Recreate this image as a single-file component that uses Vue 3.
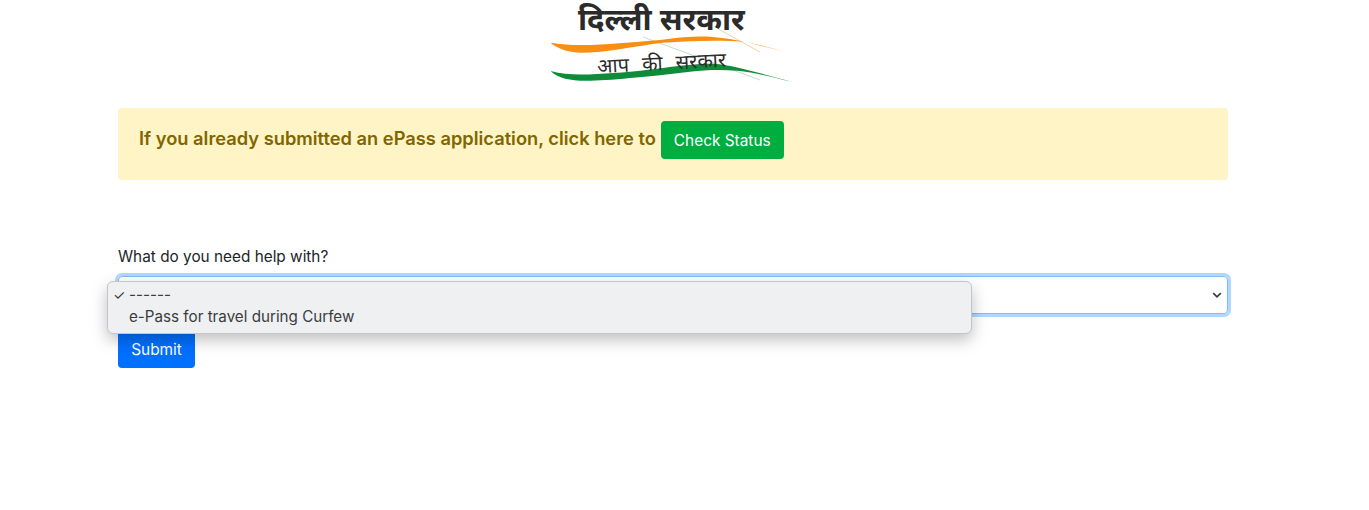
<script setup>
const options = [
  { text: '------', checked: true },
  { text: 'e-Pass for travel during Curfew', checked: false },
]
</script>

<template>
  <main class="page">
    <header class="logo">
      <svg class="logo-art" viewBox="0 -10 244 62" width="244" height="62">
        <path d="M168 -5 L210 18" stroke="#e9b36a" stroke-width="0.6" fill="none" />
        <path d="M93 3 L210 46" stroke="#9cc4aa" stroke-width="0.6" fill="none" />
        <path d="M0.7 8.7 C30 14 70 9 110 6 C130 3 150 2 160 2.7 C190 5 215 13 240 19 C220 14 205 9 193 7.7 C170 6 140 7 113 8.7 C85 12 55 19 30 18.7 C15 18 5 13 0.7 8.7 Z" fill="#f98f12" />
        <path d="M0.7 37 C15 41 30 41 47 40 C70 39 90 37 113 34 C135 31 155 29 167 30 C180 31 210 39 242 47.7 C220 43 205 38 187 36.7 C170 35.5 155 36 140 37.7 C120 40 100 42.7 80 44 C60 46 45 47 30 46.7 C15 46 5 42 0.7 37 Z" fill="#0e8c3a" />
      </svg>
      <span class="logo-title">दिल्ली सरकार</span>
      <span class="logo-sub">आप की सरकार</span>
    </header>

    <section class="notice">
      <h4>If you already submitted an ePass application, click here to</h4>
      <button class="btn btn-green">Check Status</button>
    </section>

    <form class="form" @submit.prevent>
      <label class="form-label">What do you need help with?</label>
      <div class="select-wrap">
        <div class="select">
          <svg class="chevron" viewBox="0 0 16 16" width="10" height="10">
            <path d="M2 5 L8 11 L14 5" fill="none" stroke="#343a40" stroke-width="2.6" />
          </svg>
        </div>
        <ul class="menu">
          <li v-for="opt in options" :key="opt.text">
            <span class="tick">{{ opt.checked ? '✓' : '' }}</span>{{ opt.text }}
          </li>
        </ul>
      </div>
      <button class="btn btn-blue">Submit</button>
    </form>
  </main>
</template>

<style>
html, body {
  background: #fff;
}
</style>

<style scoped>
.page {
  width: 1110px;
  margin-left: 118px;
  font-family: Inter, "Liberation Sans", sans-serif;
  color: #212529;
}

.logo {
  position: relative;
  width: 244px;
  height: 108px;
  margin-left: 432px;
}

.logo-art {
  position: absolute;
  left: 0;
  top: 24px;
}

.logo-title {
  position: absolute;
  left: 28px;
  top: 0;
  font-family: "Noto Sans", "DejaVu Sans", sans-serif;
  font-size: 31px;
  line-height: 36px;
  font-weight: 700;
  color: #2b2b2b;
  white-space: nowrap;
}

.logo-sub {
  position: absolute;
  left: 47px;
  top: 49px;
  font-family: "Noto Sans", "DejaVu Sans", sans-serif;
  font-size: 20px;
  word-spacing: 8px;
  color: #2b2b2b;
  white-space: nowrap;
  transform: rotate(-3deg);
}

.notice {
  display: flex;
  align-items: center;
  gap: 5px;
  height: 72px;
  padding: 0 21px 8px;
  box-sizing: border-box;
  background: #fff4c6;
  border-radius: 4px;
  margin-bottom: 65px;
}

.notice h4 {
  margin: 0 0 4px;
  font-size: 18.3px;
  font-weight: 600;
  color: #806600;
  white-space: nowrap;
}

.btn {
  border: none;
  border-radius: 4px;
  color: #fff;
  font-family: inherit;
  font-size: 15.4px;
  padding: 0 13px;
}

.btn-green {
  background: #00ae3f;
  height: 38px;
}

.btn-blue {
  display: block;
  background: #0070ff;
  height: 38px;
  width: 77px;
  padding: 0;
}

.form-label {
  display: block;
  font-size: 15.35px;
  line-height: 24px;
  margin-bottom: 7px;
}

.select-wrap {
  position: relative;
  margin-bottom: 16px;
}

.select {
  display: flex;
  align-items: center;
  justify-content: flex-end;
  height: 38px;
  box-sizing: border-box;
  padding-right: 5px;
  border: 1px solid #80bdff;
  border-radius: 4px;
  box-shadow: 0 0 0 3px rgba(0, 123, 255, .3);
}

.menu {
  position: absolute;
  left: -11px;
  top: 5px;
  width: 865px;
  height: 53px;
  box-sizing: border-box;
  margin: 0;
  padding: 2px 0;
  list-style: none;
  background: #eff0f2;
  border: 1px solid #c4c5c7;
  border-radius: 6px;
  box-shadow: 0 6px 16px rgba(0, 0, 0, .25);
  font-size: 15.2px;
  color: #3a3d40;
}

.menu li {
  display: flex;
  height: 22px;
  line-height: 22px;
  white-space: nowrap;
}

.tick {
  width: 21px;
  padding-left: 5px;
  box-sizing: border-box;
  font-size: 14px;
}
</style>
